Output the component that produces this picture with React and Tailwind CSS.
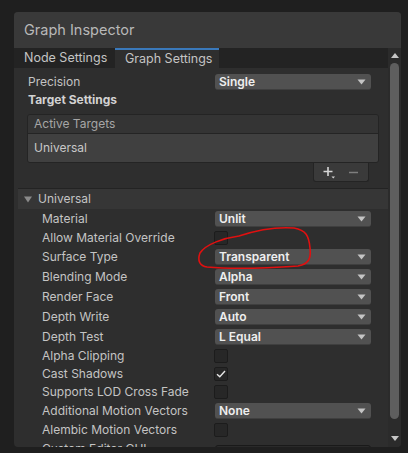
import React from 'react';

const rows = [
  { label: 'Material', type: 'dropdown', value: 'Unlit' },
  { label: 'Allow Material Override', type: 'check' },
  { label: 'Surface Type', type: 'dropdown', value: 'Transparent' },
  { label: 'Blending Mode', type: 'dropdown', value: 'Alpha' },
  { label: 'Render Face', type: 'dropdown', value: 'Front' },
  { label: 'Depth Write', type: 'dropdown', value: 'Auto' },
  { label: 'Depth Test', type: 'dropdown', value: 'L Equal' },
  { label: 'Alpha Clipping', type: 'check' },
  { label: 'Cast Shadows', type: 'check', checked: true },
  { label: 'Supports LOD Cross Fade', type: 'check' },
  { label: 'Additional Motion Vectors', type: 'dropdown', value: 'None' },
  { label: 'Alembic Motion Vectors', type: 'check' },
  { label: 'Custom Editor GUI', type: 'field' },
];

const Arrow = () => (
  <svg width="9" height="6" viewBox="0 0 9 6" className="shrink-0">
    <path d="M0.5 0.5 H8.5 L4.5 5.5 Z" fill="#c4c4c4" />
  </svg>
);

const Dropdown = ({ value }) => (
  <div className="w-[156px] h-[16px] rounded-[3px] bg-[#515151] border-b border-[#3f3f3f] flex items-center justify-between pl-[4px] pr-[5px]">
    <span className="text-[12px] font-semibold text-[#eeeeee] leading-none">{value}</span>
    <Arrow />
  </div>
);

const Checkbox = ({ checked }) => (
  <div className="w-[14px] h-[14px] ml-[-1px] rounded-[2px] bg-[#272727] border border-[#1c1c1c] flex items-center justify-center">
    {checked && (
      <svg width="10" height="8" viewBox="0 0 10 8">
        <path d="M1 4.2 L3.8 6.8 L9 1" stroke="#e6e6e6" strokeWidth="1.4" fill="none" />
      </svg>
    )}
  </div>
);

const App = () => {
  return (
    <div
      className="w-[408px] h-[453px] bg-[#1f1f1f] pt-[12px] pl-[14px] overflow-hidden"
      style={{ fontFamily: 'Inter, "Noto Sans", sans-serif' }}
    >
      <div className="w-[387px] h-[435px] rounded-[4px] bg-[#2e2e2e] overflow-hidden flex flex-col relative">
        <div className="h-[36px] shrink-0 bg-[#393939] flex items-center px-[10px] text-[14.5px] text-[#b8b8b8]">
          Graph Inspector
        </div>

        <div className="flex flex-1 min-h-0">
          <div className="flex-1 min-w-0 flex flex-col overflow-hidden">
            {/* tabs */}
            <div className="h-[20px] shrink-0 bg-[#232323] flex text-[12.5px] text-[#c4c4c4]">
              <div className="w-[101px] flex items-center pl-[10px]">Node Settings</div>
              <div className="w-[104px] flex items-center pl-[10px] bg-[#2e2e2e] border-t-2 border-[#3a79bb]">
                Graph Settings
              </div>
            </div>

            <div className="pt-[4px] text-[12px] text-[#c4c4c4]">
              <div className="flex items-center h-[20px] pl-[14px]">
                <div className="w-[187px]">Precision</div>
                <Dropdown value="Single" />
              </div>
              <div className="flex items-center h-[16px] pl-[14px] font-bold text-[#d2d2d2]">Target Settings</div>

              {/* active targets list */}
              <div className="ml-[13px] mr-[9px] mt-[6px] rounded-[3px] border border-[#242424] overflow-hidden">
                <div className="h-[19px] bg-[#343434] border-b border-[#242424] flex items-center pl-[6px] text-[#a6a6a6]">
                  Active Targets
                </div>
                <div className="h-[28px] bg-[#404040] flex items-center pl-[6px] text-[#c8c8c8]">Universal</div>
              </div>
              <div className="flex justify-end mr-[19px]">
                <div className="w-[56px] h-[19px] bg-[#3a3a3a] border border-t-0 border-[#242424] rounded-b-[3px] flex items-center pl-[9px] gap-[12px]">
                  <svg width="14" height="13" viewBox="0 0 14 13">
                    <path d="M5 1 V10 M0.5 5.5 H9.5" stroke="#d6d6d6" strokeWidth="1.6" />
                    <path d="M8.5 10.5 H12 L10.25 12.5 Z" fill="#d6d6d6" />
                  </svg>
                  <svg width="10" height="3" viewBox="0 0 10 3">
                    <path d="M0 1.5 H9" stroke="#7e7e7e" strokeWidth="1.6" />
                  </svg>
                </div>
              </div>

              {/* universal foldout */}
              <div className="mt-[6px] ml-[4px] border-t border-[#232323] h-[21px] bg-[#363636] flex items-center pl-[6px] gap-[6px] text-[#c4c4c4]">
                <svg width="8" height="7" viewBox="0 0 8 7">
                  <path d="M0 0.5 H8 L4 6.5 Z" fill="#8a8a8a" />
                </svg>
                <span>Universal</span>
              </div>

              {rows.map((row, i) => (
                <div
                  key={i}
                  className={`flex items-center pl-[28px] ${row.type === 'check' ? 'h-[18px]' : 'h-[20px]'}`}
                >
                  <div className="w-[173px] truncate">{row.label}</div>
                  {row.type === 'dropdown' && <Dropdown value={row.value} />}
                  {row.type === 'check' && <Checkbox checked={row.checked} />}
                  {row.type === 'field' && (
                    <div className="w-[156px] h-[16px] mt-[8px] rounded-[3px] bg-[#2a2a2a] border border-[#1a1a1a]" />
                  )}
                </div>
              ))}
            </div>
          </div>

          {/* scrollbar */}
          <div className="w-[13px] shrink-0 bg-[#2b2b2b] flex flex-col items-center pt-[5px] pb-[6px]">
            <svg width="8" height="5" viewBox="0 0 8 5">
              <path d="M0 5 H8 L4 0 Z" fill="#c6c6c6" />
            </svg>
            <div className="w-[9px] flex-1 mt-[5px] mb-[17px] rounded-full bg-[#5e5e5e]" />
            <svg width="8" height="5" viewBox="0 0 8 5">
              <path d="M0 0 H8 L4 5 Z" fill="#c6c6c6" />
            </svg>
          </div>
        </div>

        {/* red freehand annotation */}
        <svg
          className="absolute left-0 top-0 pointer-events-none"
          width="387"
          height="435"
          viewBox="0 0 387 435"
        >
          <path
            d="M225 224 C210 226 192 232 186 241 C183 249 186 254 193 255 C215 257 255 256 284 254 C296 252 297 245 296 236 C295 224 292 218 280 216 C266 215 246 217 225 224"
            stroke="#e01010"
            strokeWidth="1.6"
            fill="none"
            strokeLinecap="round"
          />
        </svg>
      </div>
    </div>
  );
};

export default App;
